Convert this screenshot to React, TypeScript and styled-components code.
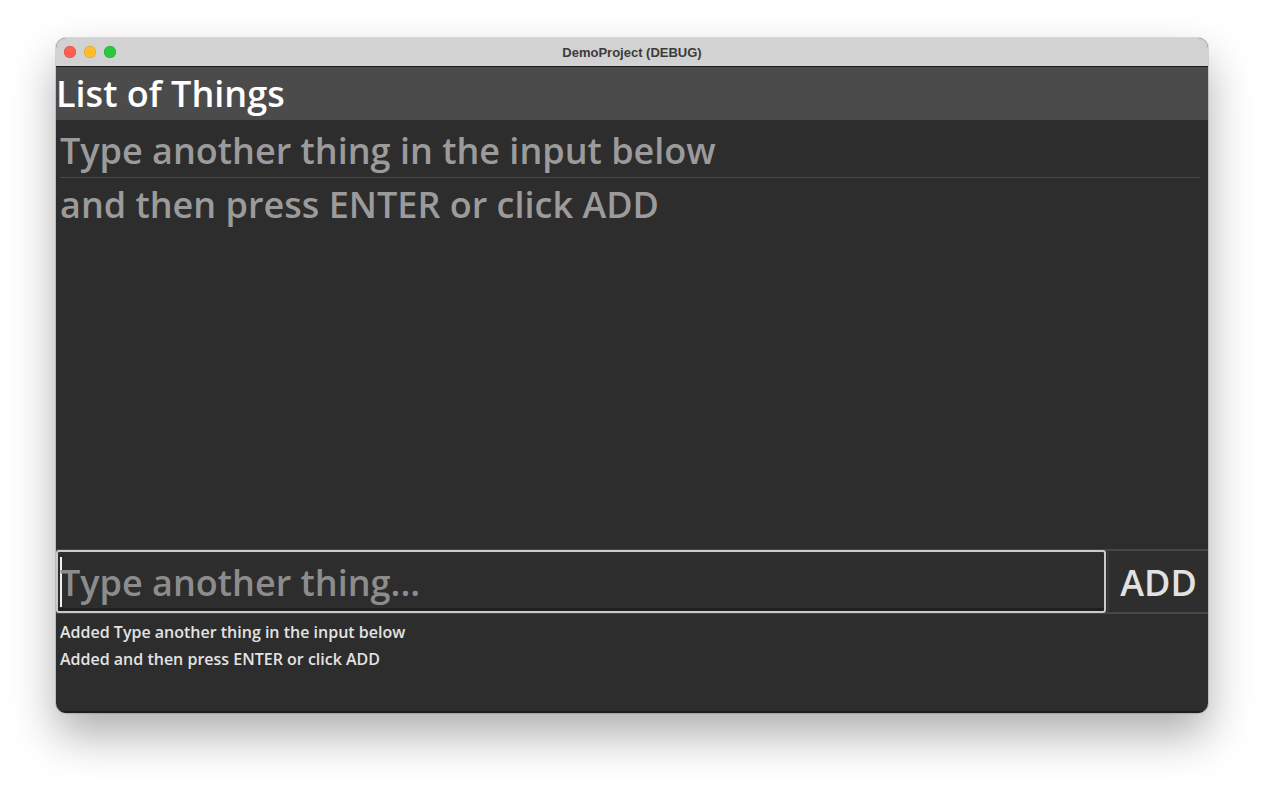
import React from "react";
import styled, { createGlobalStyle } from "styled-components";

const Global = createGlobalStyle`
  html, body { margin: 0; padding: 0; background: #ffffff; }
  body { font-family: "Open Sans", "Noto Sans", sans-serif; }
`;

const Stage = styled.div`
  width: 1264px;
  height: 788px;
  padding: 38px 0 0 56px;
  box-sizing: border-box;
  background: #ffffff;
`;

const Window = styled.div`
  width: 1152px;
  height: 675px;
  border-radius: 10px;
  overflow: hidden;
  display: flex;
  flex-direction: column;
  background: #2d2d2d;
  box-shadow: 0 22px 45px rgba(0, 0, 0, 0.32), 0 0 0 1px rgba(0, 0, 0, 0.12);
`;

const TitleBar = styled.div`
  height: 28px;
  flex: none;
  background: #d1d2d1;
  border-bottom: 1px solid #1c1c1c;
  display: flex;
  align-items: center;
  justify-content: center;
  position: relative;
`;

const Lights = styled.div`
  position: absolute;
  left: 8px;
  top: 8px;
  display: flex;
  gap: 8px;
`;

const Light = styled.span<{ $c: string; $b: string }>`
  width: 12px;
  height: 12px;
  border-radius: 50%;
  background: ${(p) => p.$c};
  box-shadow: inset 0 0 0 0.5px ${(p) => p.$b};
`;

const WinTitle = styled.div`
  font-family: "Liberation Sans", "DejaVu Sans", sans-serif;
  font-size: 13px;
  font-weight: 700;
  color: #3b3b3b;
  padding-top: 1px;
`;

const Header = styled.div`
  height: 53px;
  flex: none;
  background: #4b4b4b;
  display: flex;
  align-items: center;
`;

const HeaderText = styled.h1`
  margin: 0;
  font-size: 36px;
  font-weight: 600;
  color: #ffffff;
  line-height: 1;
  padding-top: 1px;
`;

const List = styled.div`
  flex: 1;
  padding: 4px 8px 0 4px;
  display: flex;
  flex-direction: column;
`;

const Item = styled.div<{ $sep?: boolean }>`
  font-size: 36px;
  font-weight: 600;
  color: #9b9b9b;
  height: 53px;
  line-height: 53px;
  border-bottom: ${(p) => (p.$sep ? "1px solid #4b4b4b" : "none")};
`;

const InputRow = styled.div`
  height: 65px;
  flex: none;
  display: flex;
  border-top: 2px solid #474747;
  border-bottom: 2px solid #474747;
  box-sizing: border-box;
`;

const InputBox = styled.div`
  flex: 1;
  border: 2px solid #cacaca;
  border-radius: 3px;
  margin-top: -1px;
  margin-bottom: -1px;
  background: #2d2d2d;
  box-shadow: inset 0 -3px 0 #1f1f1f;
  display: flex;
  align-items: center;
  padding-left: 2px;
`;

const Caret = styled.span`
  width: 2px;
  height: 50px;
  background: #f0f0f0;
  margin-right: -2px;
  flex: none;
`;

const Placeholder = styled.span`
  font-size: 36px;
  font-weight: 600;
  color: #8c8c8c;
  line-height: 1;
  padding-top: 2px;
`;

const AddButton = styled.button`
  width: 101px;
  flex: none;
  margin-left: 1px;
  background: #2e2e2e;
  border: none;
  border-left: 2px solid #3a3a3a;
  color: #e2e2e2;
  font-family: "Open Sans", "Noto Sans", sans-serif;
  font-size: 36px;
  font-weight: 600;
  padding: 2px 0 0 0;
  line-height: 1;
`;

const Log = styled.div`
  height: 99px;
  flex: none;
  box-sizing: border-box;
  padding: 5px 4px 0 4px;
  display: flex;
  flex-direction: column;
  border-bottom: 2px solid #1e1e1e;
`;

const LogLine = styled.div`
  font-size: 16px;
  font-weight: 600;
  color: #e3e3e3;
  line-height: 27px;
`;

export default function App() {
  return (
    <>
      <Global />
      <Stage>
        <Window>
          <TitleBar>
            <Lights>
              <Light $c="#fe5f57" $b="#e0443e" />
              <Light $c="#febc2e" $b="#dea123" />
              <Light $c="#28c840" $b="#1aab29" />
            </Lights>
            <WinTitle>DemoProject (DEBUG)</WinTitle>
          </TitleBar>
          <Header>
            <HeaderText>List of Things</HeaderText>
          </Header>
          <List>
            <Item $sep>Type another thing in the input below</Item>
            <Item>and then press ENTER or click ADD</Item>
          </List>
          <InputRow>
            <InputBox>
              <Caret />
              <Placeholder>Type another thing...</Placeholder>
            </InputBox>
            <AddButton>ADD</AddButton>
          </InputRow>
          <Log>
            <LogLine>Added Type another thing in the input below</LogLine>
            <LogLine>Added and then press ENTER or click ADD</LogLine>
          </Log>
        </Window>
      </Stage>
    </>
  );
}
